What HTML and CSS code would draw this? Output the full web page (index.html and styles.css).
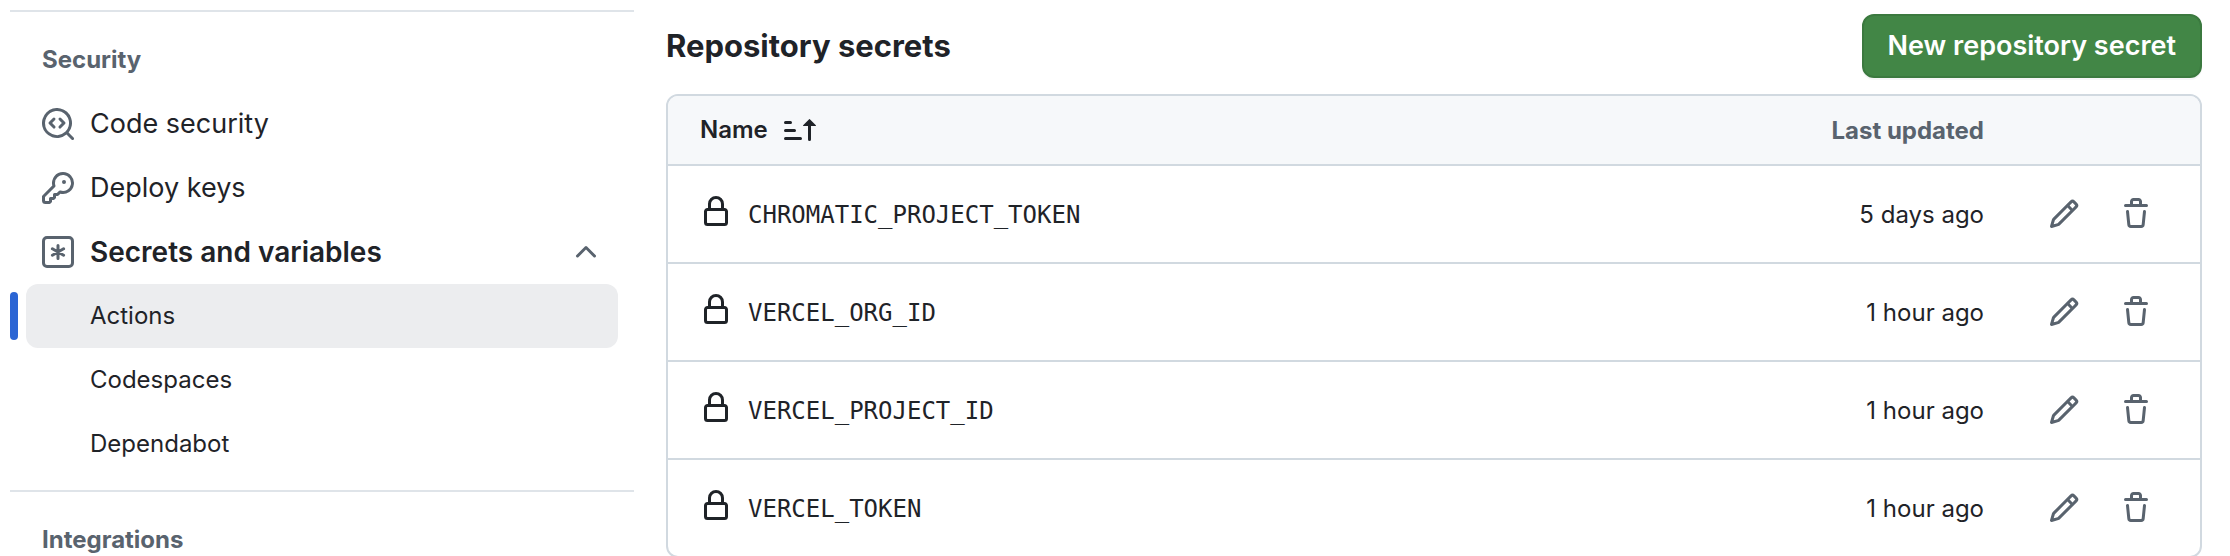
FILE: index.html
```html
<!DOCTYPE html>
<html lang="en">
<head>
<meta charset="utf-8">
<title>Actions secrets</title>
<link rel="stylesheet" href="styles.css">
</head>
<body>
<svg class="sprite" aria-hidden="true">
  <symbol id="codescan" viewBox="0 0 16 16"><path d="M8.47 4.97a.75.75 0 0 0 0 1.06L9.94 7.5 8.47 8.97a.75.75 0 1 0 1.06 1.06l2-2a.75.75 0 0 0 0-1.06l-2-2a.75.75 0 0 0-1.06 0ZM6.53 6.03a.75.75 0 0 0-1.06-1.06l-2 2a.75.75 0 0 0 0 1.06l2 2a.75.75 0 1 0 1.06-1.06L5.06 7.5l1.47-1.47Z"/><path d="M12.246 13.307a7.501 7.501 0 1 1 1.06-1.06l2.474 2.473a.749.749 0 0 1-.326 1.275.749.749 0 0 1-.734-.215ZM1.5 7.5a6.002 6.002 0 0 0 3.608 5.504 6.002 6.002 0 0 0 6.486-1.117.748.748 0 0 1 .292-.293A6 6 0 1 0 1.5 7.5Z"/></symbol>
  <symbol id="key" viewBox="0 0 16 16"><path d="M10.5 0a5.499 5.499 0 1 1-1.288 10.848l-.932.932a.749.749 0 0 1-.53.22H7v.75a.749.749 0 0 1-.22.53l-.5.5a.749.749 0 0 1-.53.22H5v.75a.749.749 0 0 1-.22.53l-.5.5a.749.749 0 0 1-.53.22h-2A1.75 1.75 0 0 1 0 14.25v-2c0-.199.079-.389.22-.53l4.932-4.932A5.5 5.5 0 0 1 10.5 0Zm-4 5.5c-.001.431.069.86.205 1.269a.75.75 0 0 1-.181.768L1.5 12.56v1.69c0 .138.112.25.25.25h1.69l.06-.06v-1.19a.75.75 0 0 1 .75-.75h1.19l.06-.06v-1.19a.75.75 0 0 1 .75-.75h1.19l1.023-1.025a.75.75 0 0 1 .768-.18A4 4 0 1 0 6.5 5.5ZM11 6a1 1 0 1 1 0-2 1 1 0 0 1 0 2Z"/></symbol>
  <symbol id="asterisk" viewBox="0 0 16 16"><g fill="none" stroke="currentColor" stroke-width="1.5" stroke-linecap="round"><rect x=".75" y=".75" width="14.5" height="14.5" rx="1.75"/><path d="M8 4.75v6.5M5.2 6.4l5.6 3.2M5.2 9.6l5.6-3.2"/></g></symbol>
  <symbol id="chevron" viewBox="0 0 16 16"><path d="M3.22 10.53a.749.749 0 0 1 0-1.06l4.25-4.25a.749.749 0 0 1 1.06 0l4.25 4.25a.749.749 0 1 1-1.06 1.06L8 6.811 4.28 10.53a.749.749 0 0 1-1.06 0Z"/></symbol>
  <symbol id="sort" viewBox="0 0 16 16"><path d="m12.927 2.573 3 3A.25.25 0 0 1 15.75 6H13.5v6.75a.75.75 0 0 1-1.5 0V6H9.75a.25.25 0 0 1-.177-.427l3-3a.25.25 0 0 1 .354 0ZM0 12.25a.75.75 0 0 1 .75-.75h7.5a.75.75 0 0 1 0 1.5H.75a.75.75 0 0 1-.75-.75Zm0-4a.75.75 0 0 1 .75-.75h4.5a.75.75 0 0 1 0 1.5H.75A.75.75 0 0 1 0 8.25Zm0-4a.75.75 0 0 1 .75-.75h2.5a.75.75 0 0 1 0 1.5H.75A.75.75 0 0 1 0 4.25Z"/></symbol>
  <symbol id="lock" viewBox="0 0 16 16"><path d="M4 4a4 4 0 0 1 8 0v2h.25c.966 0 1.75.784 1.75 1.75v5.5A1.75 1.75 0 0 1 12.25 15h-8.5A1.75 1.75 0 0 1 2 13.25v-5.5C2 6.784 2.784 6 3.75 6H4Zm8.25 3.5h-8.5a.25.25 0 0 0-.25.25v5.5c0 .138.112.25.25.25h8.5a.25.25 0 0 0 .25-.25v-5.5a.25.25 0 0 0-.25-.25ZM10.5 6V4a2.5 2.5 0 1 0-5 0v2Z"/></symbol>
  <symbol id="pencil" viewBox="0 0 16 16"><path d="M11.013 1.427a1.75 1.75 0 0 1 2.474 0l1.086 1.086a1.75 1.75 0 0 1 0 2.474l-8.61 8.61c-.21.21-.47.364-.756.445l-3.251.93a.75.75 0 0 1-.927-.928l.929-3.25c.081-.286.235-.547.445-.758l8.61-8.61Zm.176 4.823L9.75 4.81l-6.286 6.287a.253.253 0 0 0-.064.108l-.558 1.953 1.953-.558a.253.253 0 0 0 .108-.064Zm1.238-3.763a.25.25 0 0 0-.354 0L10.811 3.75l1.439 1.44 1.263-1.263a.25.25 0 0 0 0-.354Z"/></symbol>
  <symbol id="trash" viewBox="0 0 16 16"><path d="M11 1.75V3h2.25a.75.75 0 0 1 0 1.5H2.75a.75.75 0 0 1 0-1.5H5V1.75C5 .784 5.784 0 6.75 0h2.5C10.216 0 11 .784 11 1.75ZM4.496 6.675l.66 6.6a.25.25 0 0 0 .249.225h5.19a.25.25 0 0 0 .249-.225l.66-6.6a.75.75 0 0 1 1.492.149l-.66 6.6A1.748 1.748 0 0 1 10.595 15h-5.19a1.75 1.75 0 0 1-1.741-1.575l-.66-6.6a.75.75 0 1 1 1.492-.15ZM6.5 1.75V3h3V1.75a.25.25 0 0 0-.25-.25h-2.5a.25.25 0 0 0-.25.25Z"/></symbol>
</svg>
<div class="layout">
  <nav class="sidebar" aria-label="Settings">
    <section class="group">
      <h3 class="group-title">Security</h3>
      <ul class="nav-list">
        <li><a class="nav-item" href="#code-security"><svg class="icon"><use href="#codescan"/></svg><span>Code security</span></a></li>
        <li><a class="nav-item" href="#deploy-keys"><svg class="icon"><use href="#key"/></svg><span>Deploy keys</span></a></li>
        <li>
          <button class="nav-item nav-toggle" type="button" aria-expanded="true"><svg class="icon"><use href="#asterisk"/></svg><span class="grow">Secrets and variables</span><svg class="icon"><use href="#chevron"/></svg></button>
          <ul class="nav-list">
            <li class="current"><a class="nav-item nav-sub" href="#actions" aria-current="page">Actions</a></li>
            <li><a class="nav-item nav-sub" href="#codespaces">Codespaces</a></li>
            <li><a class="nav-item nav-sub" href="#dependabot">Dependabot</a></li>
          </ul>
        </li>
      </ul>
    </section>
    <section class="group">
      <h3 class="group-title">Integrations</h3>
    </section>
  </nav>
  <main class="content">
    <header class="content-head">
      <h2 class="title">Repository secrets</h2>
      <button class="primary" type="button">New repository secret</button>
    </header>
    <table class="secrets">
      <thead>
        <tr>
          <th class="name" scope="col"><button class="sort" type="button">Name<svg class="icon"><use href="#sort"/></svg></button></th>
          <th class="updated" scope="col">Last updated</th>
          <td class="actions"></td>
        </tr>
      </thead>
      <tbody>
        <tr>
          <td class="name"><div class="secret"><svg class="icon lock"><use href="#lock"/></svg><code>CHROMATIC_PROJECT_TOKEN</code></div></td>
          <td class="updated">5 days ago</td>
          <td class="actions"><div class="tools"><button class="tool" type="button" aria-label="Edit CHROMATIC_PROJECT_TOKEN"><svg class="icon"><use href="#pencil"/></svg></button><button class="tool" type="button" aria-label="Delete CHROMATIC_PROJECT_TOKEN"><svg class="icon"><use href="#trash"/></svg></button></div></td>
        </tr>
        <tr>
          <td class="name"><div class="secret"><svg class="icon lock"><use href="#lock"/></svg><code>VERCEL_ORG_ID</code></div></td>
          <td class="updated">1 hour ago</td>
          <td class="actions"><div class="tools"><button class="tool" type="button" aria-label="Edit VERCEL_ORG_ID"><svg class="icon"><use href="#pencil"/></svg></button><button class="tool" type="button" aria-label="Delete VERCEL_ORG_ID"><svg class="icon"><use href="#trash"/></svg></button></div></td>
        </tr>
        <tr>
          <td class="name"><div class="secret"><svg class="icon lock"><use href="#lock"/></svg><code>VERCEL_PROJECT_ID</code></div></td>
          <td class="updated">1 hour ago</td>
          <td class="actions"><div class="tools"><button class="tool" type="button" aria-label="Edit VERCEL_PROJECT_ID"><svg class="icon"><use href="#pencil"/></svg></button><button class="tool" type="button" aria-label="Delete VERCEL_PROJECT_ID"><svg class="icon"><use href="#trash"/></svg></button></div></td>
        </tr>
        <tr>
          <td class="name"><div class="secret"><svg class="icon lock"><use href="#lock"/></svg><code>VERCEL_TOKEN</code></div></td>
          <td class="updated">1 hour ago</td>
          <td class="actions"><div class="tools"><button class="tool" type="button" aria-label="Edit VERCEL_TOKEN"><svg class="icon"><use href="#pencil"/></svg></button><button class="tool" type="button" aria-label="Delete VERCEL_TOKEN"><svg class="icon"><use href="#trash"/></svg></button></div></td>
        </tr>
      </tbody>
    </table>
  </main>
</div>
</body>
</html>
```
FILE: styles.css
```css
:root {
  --fg: #1f2328;
  --muted: #59636e;
  --border: #d1d9e0;
  --divider: #dfe4e9;
  --subtle: #f6f8fa;
}

* { box-sizing: border-box; }

body {
  margin: 0;
  height: 100vh;
  overflow: hidden;
  background: #fff;
  color: var(--fg);
  font: 24px/36px Inter, "Liberation Sans", sans-serif;
}

h2, h3, ul { margin: 0; padding: 0; }
ul { list-style: none; }
button { border: 0; background: none; color: inherit; font: inherit; cursor: pointer; }
a { color: inherit; text-decoration: none; }

.sprite { display: none; }

.icon {
  display: block;
  flex: none;
  width: 32px;
  height: 32px;
  fill: currentColor;
}

.layout {
  display: grid;
  grid-template-columns: 624px 1fr;
  gap: 32px;
  padding: 10px 28px 0 10px;
}

/* Sidebar */
.group {
  padding-bottom: 14px;
  border-top: 2px solid var(--divider);
}

.group-title {
  padding: 30px 32px 14px;
  color: var(--muted);
  font-size: 24px;
  font-weight: 700;
}

.nav-item {
  display: flex;
  align-items: center;
  gap: 16px;
  min-height: 64px;
  margin: 0 16px;
  padding: 0 16px;
  border-radius: 12px;
  font-size: 27px;
}

.nav-item .icon { color: var(--muted); }

.nav-toggle {
  width: calc(100% - 32px);
  font-size: 28px;
  font-weight: 600;
  text-align: left;
}

.grow { flex: 1; }

.nav-sub {
  padding-left: 64px;
  font-size: 24px;
}

.current {
  display: flex;
  align-items: center;
}

.current::before {
  content: "";
  width: 8px;
  height: 48px;
  border-radius: 12px;
  background: #2b65d4;
}

.current .nav-sub {
  flex: 1;
  margin-left: 8px;
  background: #ecedef;
}

/* Content */
.content { padding-top: 4px; }

.content-head {
  display: flex;
  align-items: center;
  justify-content: space-between;
  margin-bottom: 16px;
}

.title {
  font-size: 31px;
  font-weight: 700;
}

.primary {
  height: 64px;
  padding: 0 24px;
  border: 2px solid #3b793f;
  border-radius: 12px;
  background: #428646;
  box-shadow: 0 2px 0 rgba(31, 35, 40, 0.04);
  color: #fff;
  font-size: 27px;
  font-weight: 600;
}

.secrets {
  width: 100%;
  border: 2px solid var(--border);
  border-radius: 12px;
  border-spacing: 0;
  overflow: hidden;
}

.secrets th,
.secrets td {
  height: 98px;
  padding: 0;
  border-top: 2px solid var(--border);
}

.secrets thead th,
.secrets thead td {
  height: 68px;
  border-top: 0;
  background: var(--subtle);
  font-weight: 600;
}

.secrets .name {
  padding-left: 32px;
  text-align: left;
}

.secrets .updated {
  width: 240px;
  padding-top: 2px;
  text-align: right;
}

.secrets .actions { width: 216px; }

.secrets th.updated {
  color: var(--muted);
  font-weight: 700;
}

.sort {
  display: flex;
  align-items: center;
  gap: 16px;
  padding: 0;
}

.secret {
  display: flex;
  align-items: center;
  gap: 16px;
}

.secret .lock {
  height: 36px;
  padding-bottom: 4px;
}

.secret code {
  padding-top: 2px;
  font-family: "DejaVu Sans Mono", "Liberation Mono", monospace;
}

.tools {
  display: flex;
  justify-content: flex-end;
  gap: 8px;
  padding-right: 32px;
}

.tool {
  padding: 16px;
  color: var(--muted);
}
```
